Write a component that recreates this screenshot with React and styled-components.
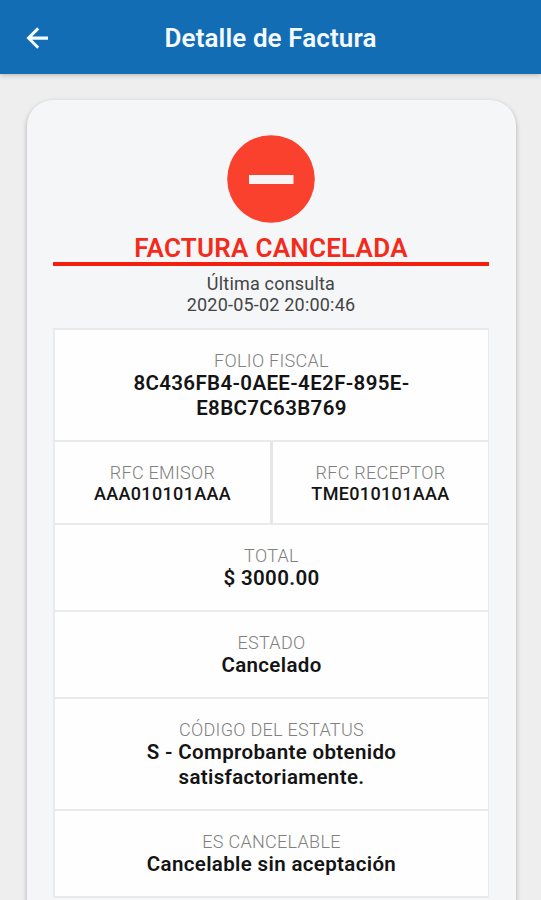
import React from "react";
import styled, { createGlobalStyle } from "styled-components";

const GlobalStyle = createGlobalStyle`
  * {
    box-sizing: border-box;
  }
  body {
    margin: 0;
    background-color: #eeeeee;
    font-family: Roboto, "Liberation Sans", sans-serif;
  }
`;
const Screen = styled.div`
  height: 900px;
  overflow: hidden;
  display: flex;
  flex-direction: column;
  background-color: #eeeeee;
`;
const Header = styled.header`
  flex: none;
  height: 74px;
  padding: 2px 23px 0;
  display: grid;
  grid-template-columns: 28px 1fr 28px;
  align-items: center;
  background-color: #136db5;
  box-shadow: 0 1px 5px rgba(0, 0, 0, 0.25);
`;
const BackButton = styled.button`
  padding: 0;
  border: none;
  background: none;
  display: flex;
  cursor: pointer;
`;
const Title = styled.h1`
  margin: 0;
  color: #f4faff;
  font-size: 26px;
  font-weight: 600;
  line-height: 32px;
  letter-spacing: 0.1px;
  text-align: center;
`;
const Card = styled.main`
  flex: none;
  margin: 26px 25px 0 27px;
  padding: 35px 27px 40px 26px;
  border-radius: 26px 26px 0 0;
  background-color: #f4f6f8;
  box-shadow: 0 2px 5px rgba(0, 0, 0, 0.28);
`;
const StatusIcon = styled.svg`
  display: block;
  margin: 0 auto;
`;
const StatusTitle = styled.h2`
  margin: 9px 0 0;
  height: 34px;
  border-bottom: 4px solid #f3200f;
  color: #f42a1a;
  font-size: 26px;
  font-weight: 600;
  line-height: 33px;
  letter-spacing: 0.25px;
  text-align: center;
`;
const LastQuery = styled.p`
  margin: 7px 0 13px;
  color: #444444;
  font-size: 18px;
  line-height: 21px;
  letter-spacing: 0.2px;
  text-align: center;
`;
const Table = styled.div`
  border: 2px solid #e9eaeb;
  border-right-width: 1px;
  border-bottom: none;
  background-color: #fefefe;
`;
const Row = styled.div`
  display: flex;
  border-bottom: 2px solid #e9eaeb;
`;
const Cell = styled.div`
  flex: 1;
  padding: 20px 60px 19px;
  text-align: center;

  & + & {
    border-left: 3px solid #e5e6e7;
  }
`;
const HalfCell = styled(Cell)`
  padding: 20px 0 19px;
`;
const Label = styled.div`
  color: #808080;
  font-size: 18px;
  font-weight: 300;
  line-height: 21px;
  letter-spacing: 0.3px;
`;
const Value = styled.div`
  color: #141414;
  font-size: ${(props) => (props.$small ? "18px" : "20.5px")};
  font-weight: ${(props) => (props.$small ? 550 : 600)};
  line-height: ${(props) => (props.$small ? "21px" : "25px")};
  letter-spacing: 0.35px;
`;

const details = [
  { label: "TOTAL", value: "$ 3000.00" },
  { label: "ESTADO", value: "Cancelado" },
  {
    label: "CÓDIGO DEL ESTATUS",
    value: "S - Comprobante obtenido satisfactoriamente.",
  },
  { label: "ES CANCELABLE", value: "Cancelable sin aceptación" },
];

const DetailRow = ({ label, value }) => {
  return (
    <Row>
      <Cell>
        <Label>{label}</Label>
        <Value>{value}</Value>
      </Cell>
    </Row>
  );
};

const App = () => {
  return (
    <Screen>
      <GlobalStyle />
      <Header>
        <BackButton aria-label="Volver">
          <svg width="28" height="28" viewBox="0 0 28 28" fill="#f4faff">
            <path d="M25 12.4H9.2l7-7L14.2 3.2 3.4 14l10.8 10.8 2-2-7-7H25z" />
          </svg>
        </BackButton>
        <Title>Detalle de Factura</Title>
      </Header>
      <Card>
        <StatusIcon width="88" height="88" viewBox="0 0 88 88">
          <circle cx="44" cy="44" r="43.8" fill="#f9412d" />
          <rect x="22" y="40" width="44.5" height="9" fill="#f6f4f5" />
        </StatusIcon>
        <StatusTitle>FACTURA CANCELADA</StatusTitle>
        <LastQuery>
          Última consulta
          <br />
          2020-05-02 20:00:46
        </LastQuery>
        <Table>
          <DetailRow
            label="FOLIO FISCAL"
            value="8C436FB4-0AEE-4E2F-895E-E8BC7C63B769"
          />
          <Row>
            <HalfCell>
              <Label>RFC EMISOR</Label>
              <Value $small>AAA010101AAA</Value>
            </HalfCell>
            <HalfCell>
              <Label>RFC RECEPTOR</Label>
              <Value $small>TME010101AAA</Value>
            </HalfCell>
          </Row>
          {details.map((item) => (
            <DetailRow key={item.label} label={item.label} value={item.value} />
          ))}
        </Table>
      </Card>
    </Screen>
  );
};

export default App;
